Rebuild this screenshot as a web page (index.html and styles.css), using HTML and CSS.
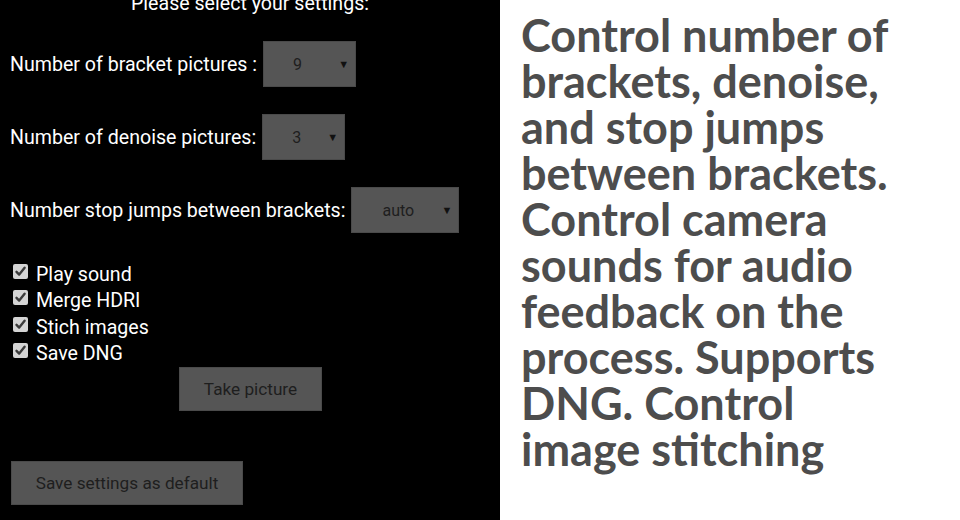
FILE: index.html
```html
<!DOCTYPE html>
<html>
<head>
<meta charset="utf-8">
<link rel="stylesheet" href="styles.css">
</head>
<body>
<div class="page">
  <section class="panel">
    <div class="title">Please select your settings:</div>
    <div class="row row-first">
      <span class="label">Number of bracket pictures :</span>
      <div class="select w93"><span class="value">9</span><span class="arrow">&#9660;</span></div>
    </div>
    <div class="row">
      <span class="label">Number of denoise pictures:</span>
      <div class="select w83"><span class="value">3</span><span class="arrow">&#9660;</span></div>
    </div>
    <div class="row">
      <span class="label">Number stop jumps between brackets:</span>
      <div class="select w108"><span class="value">auto</span><span class="arrow">&#9660;</span></div>
    </div>
    <ul class="checks">
      <li class="check"><span class="box"><svg viewBox="0 0 15 15" width="15" height="15"><path d="M3.5 7.8 L6.2 10.6 L11.6 3.8" fill="none" stroke="#3a3a3a" stroke-width="2.4" stroke-linecap="round" stroke-linejoin="round"/></svg></span>Play sound</li>
      <li class="check"><span class="box"><svg viewBox="0 0 15 15" width="15" height="15"><path d="M3.5 7.8 L6.2 10.6 L11.6 3.8" fill="none" stroke="#3a3a3a" stroke-width="2.4" stroke-linecap="round" stroke-linejoin="round"/></svg></span>Merge HDRI</li>
      <li class="check"><span class="box"><svg viewBox="0 0 15 15" width="15" height="15"><path d="M3.5 7.8 L6.2 10.6 L11.6 3.8" fill="none" stroke="#3a3a3a" stroke-width="2.4" stroke-linecap="round" stroke-linejoin="round"/></svg></span>Stich images</li>
      <li class="check"><span class="box"><svg viewBox="0 0 15 15" width="15" height="15"><path d="M3.5 7.8 L6.2 10.6 L11.6 3.8" fill="none" stroke="#3a3a3a" stroke-width="2.4" stroke-linecap="round" stroke-linejoin="round"/></svg></span>Save DNG</li>
    </ul>
    <div class="take-wrap"><div class="btn btn-take">Take picture</div></div>
    <div class="btn btn-save">Save settings as default</div>
  </section>
  <section class="promo">
    <p class="promo-text">Control number of brackets, denoise, and stop jumps between brackets. Control camera sounds for audio feedback on the process. Supports DNG. Control image stitching</p>
  </section>
</div>
</body>
</html>
```
FILE: styles.css
```css
* { box-sizing: border-box; }
html, body { margin: 0; padding: 0; }
body { width: 960px; height: 520px; overflow: hidden; background: #fff; }

.page { display: flex; width: 960px; height: 520px; }

.panel {
  width: 500px;
  height: 520px;
  background: #000;
  color: #fff;
  font-family: Roboto, "Liberation Sans", sans-serif;
  font-size: 19.6px;
  padding: 0 0 0 10px;
  display: flex;
  flex-direction: column;
  overflow: hidden;
}

.title {
  text-align: center;
  height: 20px;
  line-height: 20px;
  margin-top: -6px;
  padding-right: 10px;
}

.row {
  display: flex;
  align-items: center;
  height: 46px;
  margin-top: 27px;
}
.row-first { margin-top: 27px; }

.label { white-space: nowrap; margin-right: 6px; }

.select {
  display: flex;
  align-items: center;
  height: 46px;
  background: #555;
  border: 1px solid #4a4a4a;
  color: #1e1e1e;
  font-size: 16px;
  padding: 0 6px 0 29px;
}
.w93 { width: 93px; }
.w83 { width: 83px; }
.w108 { width: 108px; padding-left: 30px; }
.value { flex: 1; }
.arrow { font-size: 11px; color: #111; }

.checks {
  list-style: none;
  margin: 28px 0 0 0;
  padding: 0;
}
.check {
  display: flex;
  align-items: center;
  height: 26.5px;
}
.box {
  width: 15px;
  height: 15px;
  margin: 0 8px 0 3px;
  background: #d4d4d4;
  border-radius: 2px;
  display: flex;
  position: relative;
  top: -3px;
}

.btn {
  background: #555;
  border: 1px solid #4a4a4a;
  color: #1e1e1e;
  font-size: 17.2px;
  height: 44px;
  display: flex;
  align-items: center;
  justify-content: center;
}
.take-wrap { display: flex; margin-top: 0; padding-left: 169px; }
.btn-take { width: 143px; }
.btn-save { width: 232px; margin-top: 50px; margin-left: 1px; }

.promo {
  flex: 1;
  padding: 12px 0 0 21px;
}
.promo-text {
  margin: 0;
  width: 390px;
  font-family: Lato, "Open Sans", sans-serif;
  font-weight: 700;
  font-size: 45px;
  line-height: 46px;
  color: #4d4d4d;
}
```
